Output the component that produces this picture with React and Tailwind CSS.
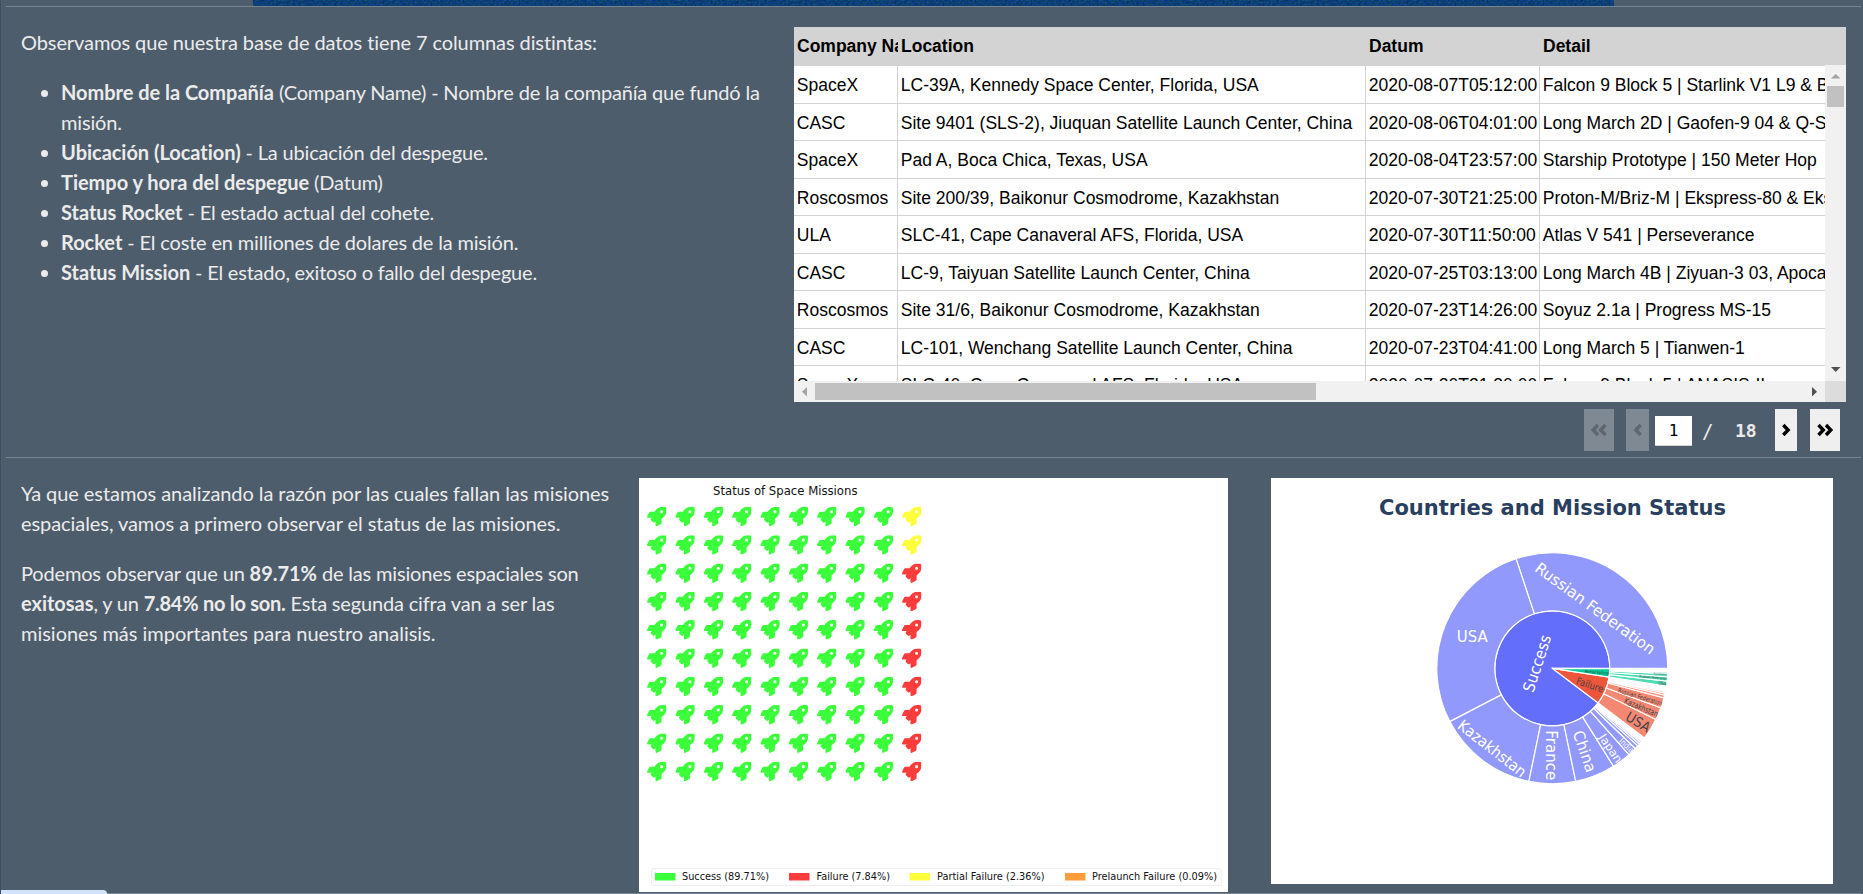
import React from "react";
import { FaRocket } from "react-icons/fa";

const rows = [
  ["SpaceX", "LC-39A, Kennedy Space Center, Florida, USA", "2020-08-07T05:12:00", "Falcon 9 Block 5 | Starlink V1 L9 & BlackSky"],
  ["CASC", "Site 9401 (SLS-2), Jiuquan Satellite Launch Center, China", "2020-08-06T04:01:00", "Long March 2D | Gaofen-9 04 & Q-SAT"],
  ["SpaceX", "Pad A, Boca Chica, Texas, USA", "2020-08-04T23:57:00", "Starship Prototype | 150 Meter Hop"],
  ["Roscosmos", "Site 200/39, Baikonur Cosmodrome, Kazakhstan", "2020-07-30T21:25:00", "Proton-M/Briz-M | Ekspress-80 & Ekspress-103"],
  ["ULA", "SLC-41, Cape Canaveral AFS, Florida, USA", "2020-07-30T11:50:00", "Atlas V 541 | Perseverance"],
  ["CASC", "LC-9, Taiyuan Satellite Launch Center, China", "2020-07-25T03:13:00", "Long March 4B | Ziyuan-3 03, Apocalypse-10"],
  ["Roscosmos", "Site 31/6, Baikonur Cosmodrome, Kazakhstan", "2020-07-23T14:26:00", "Soyuz 2.1a | Progress MS-15"],
  ["CASC", "LC-101, Wenchang Satellite Launch Center, China", "2020-07-23T04:41:00", "Long March 5 | Tianwen-1"],
  ["SpaceX", "SLC-40, Cape Canaveral AFS, Florida, USA", "2020-07-20T21:30:00", "Falcon 9 Block 5 | ANASIS-II"],
];
const COLS = "grid grid-cols-[104px_468px_174px_400px]";

function DataTable() {
  return (
    <div className="flex h-[375px] w-[1052px] flex-col overflow-hidden bg-white font-['Liberation_Sans',Arial,sans-serif] text-[17.5px] text-black">
      <div className={COLS + " h-[38px] shrink-0 bg-[#d3d3d3] font-bold leading-[38px]"}>
        {["Company Name", "Location", "Datum", "Detail"].map((h) => (
          <div key={h} className="overflow-hidden whitespace-nowrap pl-[3px]">{h}</div>
        ))}
      </div>
      <div className="flex h-[316px] shrink-0">
        <div className="h-[316px] w-[1031px] overflow-hidden">
          <div className="h-[1.25px] bg-[#d3d3d3]" />
          {rows.map((r, i) => (
            <div key={i} className={COLS + " h-[37.5px] leading-[38.4px]"}>
              {r.map((c, j) => (
                <div key={j} className="overflow-hidden whitespace-nowrap border-r border-b border-[#d3d3d3] pl-[2.8px]">{c}</div>
              ))}
            </div>
          ))}
        </div>
        <div className="flex w-[21px] flex-col items-center bg-[#f1f1f1]">
          <svg className="h-[21px] w-[21px] shrink-0" viewBox="0 0 21 21"><path d="M6 13.5h9.5L10.7 9z" fill="#a3a3a3" /></svg>
          <div className="h-[21px] w-[17px] shrink-0 bg-[#c1c1c1]" />
          <div className="grow" />
          <svg className="h-[21px] w-[21px] shrink-0" viewBox="0 0 21 21"><path d="M6 7h9.5l-4.8 5z" fill="#505050" /></svg>
        </div>
      </div>
      <div className="flex h-[21px] shrink-0 items-center bg-[#f1f1f1]">
        <svg className="h-[21px] w-[21px]" viewBox="0 0 21 21"><path d="M13 6v9.5L8 10.7z" fill="#a3a3a3" /></svg>
        <div className="h-[17px] w-[501px] bg-[#c1c1c1]" />
        <div className="grow" />
        <svg className="h-[21px] w-[21px]" viewBox="0 0 21 21"><path d="M8 6v9.5l5-4.8z" fill="#505050" /></svg>
        <div className="h-[21px] w-[21px] bg-[#dcdcdc]" />
      </div>
    </div>
  );
}

function Chevron({ double, right }) {
  return (
    <svg viewBox="0 0 20 16" className={"h-[16px] w-[20px] shrink-0 " + (right ? "" : "-scale-x-100")} fill="none" stroke="currentColor" strokeWidth="3.4">
      {double ? <path d="M3.5 3L8.3 8l-4.8 5M11 3L15.8 8L11 13" /> : <path d="M7.3 3L12.1 8L7.3 13" />}
    </svg>
  );
}

function Pager() {
  return (
    <div className="mt-[7px] flex h-[42px] items-center font-['DejaVu_Sans_Mono',monospace] text-black">
      <div className="ml-[790px] flex h-[42px] w-[30px] items-center justify-center bg-[#7f8993] text-[#5f666d]"><Chevron double /></div>
      <div className="ml-[12px] flex h-[42px] w-[23px] items-center justify-center bg-[#7f8993] text-[#5f666d]"><Chevron /></div>
      <div className="ml-[6px] mt-[2px] flex h-[30px] w-[37px] items-center justify-center border-b border-[#d3d3d3] bg-white text-[16px]">1</div>
      <div className="ml-[10px] mt-px w-[11px] text-[19px] text-[#ebebeb]">/</div>
      <div className="ml-[22px] mt-px w-[24px] text-[18px] font-bold text-[#ebebeb]">18</div>
      <div className="ml-[16px] flex h-[42px] w-[22px] items-center justify-center bg-[#efefef]"><Chevron right /></div>
      <div className="ml-[13px] flex h-[42px] w-[30px] items-center justify-center bg-[#efefef]"><Chevron double right /></div>
    </div>
  );
}

const legend = [
  [16, 43, "Success (89.71%)", 87, "#3cff3c"],
  [150, 177.5, "Failure (7.84%)", 73.5, "#ff3c3c"],
  [270.5, 298, "Partial Failure (2.36%)", 107.5, "#ffff3c"],
  [426, 453, "Prelaunch Failure (0.09%)", 125, "#ff9d3c"],
];

function Waffle() {
  const cells = [];
  for (let r = 0; r < 10; r++)
    for (let c = 0; c < 10; c++)
      cells.push(
        <FaRocket key={r * 10 + c} x={8 + c * 28.33} y={28.8 + r * 28.33} size={19.5} color={c < 9 ? "#3cff3c" : r < 2 ? "#ffff3c" : "#ff3c3c"} />
      );
  return (
    <svg viewBox="0 0 589 414" className="h-[414px] w-[589px] bg-white" fontFamily="DejaVu Sans, sans-serif">
      <text x="74" y="16.7" fontSize="12.2" textLength="144.5" lengthAdjust="spacingAndGlyphs" fill="#111">Status of Space Missions</text>
      {cells}
      <rect x="12.5" y="390.5" width="570" height="17" rx="2" fill="none" stroke="#eee" />
      {legend.map(([x, tx, label, w, color]) => (
        <g key={label}>
          <rect x={x} y="395" width="20.5" height="7.5" fill={color} />
          <text x={tx} y="402.3" fontSize="9.7" textLength={w} lengthAdjust="spacingAndGlyphs" fill="#111">{label}</text>
        </g>
      ))}
    </svg>
  );
}

function arc(r0, r1, a, b) {
  const p = (r, t) => `${(r * Math.cos((t * Math.PI) / 180)).toFixed(2)} ${(-r * Math.sin((t * Math.PI) / 180)).toFixed(2)}`;
  const big = b - a > 180 ? 1 : 0;
  return `M${p(r0, a)}L${p(r1, a)}A${r1} ${r1} 0 ${big} 0 ${p(r1, b)}L${p(r0, b)}A${r0} ${r0} 0 ${big} 1 ${p(r0, a)}Z`;
}
const inner = [[0, 322.96, "#636efa"], [322.96, 351.2, "#ef553b"], [351.2, 359.68, "#00cc96"]];
const outer = [
  ["#9299fc", [0, 108.3, 207.5, 258.3, 281.7, 302, 311.6, 316, 317.8, 319, 320, 320.8, 321.4, 321.9, 322.3, 322.6, 322.96]],
  ["#f48872", [322.96, 333.7, 340, 345.2, 346.6, 347.6, 348.4, 349, 349.5, 350, 350.4, 350.8, 351.2]],
  ["#4ddbb5", [351.2, 353.6, 355.8, 357.4, 358.2, 358.7, 359.1, 359.4, 359.68]],
];
const labels = [
  ["Success", -15.5, -5, -72, 16, 59, "#fff"],
  ["Russian Federation", 43, -60, 36, 15.5, 144, "#fff"],
  ["USA", -80, -31.5, 0, 15.5, 31, "#fff"],
  ["Kazakhstan", -60, 80, 38, 15.5, 82, "#fff"],
  ["France", -1, 87, 90, 15.5, 50, "#fff"],
  ["China", 32.5, 83, 71, 15.5, 43, "#fff"],
  ["Japan", 58.5, 80, 56, 11.5, 32, "#fff"],
  ["India", 74.5, 77, 45, 8.5, 17, "#fff"],
  ["Failure", 37.5, 16.5, 19, 10, 28, "#444"],
  ["USA", 86, 53.5, 31, 14, 26, "#444"],
  ["Kazakhstan", 89, 39, 23, 8.5, 36, "#444"],
  ["Russian Federation", 88, 28.5, 17, 6.5, 46, "#444"],
  ["Partial Failure", 44.5, 4, 4, 4, 24, "#444"],
  ["USA", 110, 15, 7, 4.5, 8, "#444"],
  ["Russian Federation", 101, 9, 5, 3.5, 28, "#444"],
  ["Kazakhstan", 108, 5.5, 3, 2.5, 13, "#444"],
];

function Sunburst() {
  return (
    <svg viewBox="0 0 562 406" className="h-[406px] w-[562px] bg-white" fontFamily="DejaVu Sans, Verdana, sans-serif">
      <text x="108" y="37" fontSize="21.2" fontWeight="bold" textLength="347" lengthAdjust="spacingAndGlyphs" fill="#2a3f5f">Countries and Mission Status</text>
      <g transform="translate(281.3 190.3)">
        <g stroke="#fff" strokeWidth="1.2">
          {inner.map(([a, b, c]) => <path key={a} d={arc(0, 57.5, a, b)} fill={c} />)}
          {outer.map(([c, s]) => s.slice(1).map((b, i) => <path key={b} d={arc(57.5, 115.5, s[i], b)} fill={c} />))}
        </g>
        {labels.map(([t, x, y, rot, size, w, c], i) => (
          <text key={i} transform={`translate(${x} ${y}) rotate(${rot})`} fontSize={size} x={-w / 2} y={size * 0.36} textLength={w} lengthAdjust="spacingAndGlyphs" fill={c}>{t}</text>
        ))}
      </g>
    </svg>
  );
}

const B = ({ children }) => <b className="tracking-[-0.03px]">{children}</b>;

export default function App() {
  return (
    <div className="relative flex h-[894px] w-[1863px] flex-col overflow-hidden border-l border-[#3f4f5f] bg-[#4e5d6c] font-['Lato',sans-serif] text-[20px] leading-[30px] tracking-[-0.17px] text-[#ebebeb] [font-variant-ligatures:none]">
      <div className="ml-[252px] h-[6px] w-[1361px] shrink-0 bg-[#0f3f78]">
        <svg className="block h-full w-full">
          <filter id="grain" colorInterpolationFilters="sRGB" x="0" y="0" width="100%" height="100%"><feTurbulence type="fractalNoise" baseFrequency="0.5" numOctaves="2" /><feColorMatrix values="0.1 0 0 0 0  0 0.3 0 0 0.1  0 0 0.45 0 0.24  0 0 0 0 1" /></filter>
          <rect width="100%" height="100%" filter="url(#grain)" />
        </svg>
      </div>
      <div className="ml-[5px] mr-[2px] h-px shrink-0 bg-[#768492]" />
      <section className="flex h-[450px] shrink-0 pt-[20px]">
        <div className="w-[793px] pl-5 pr-[24px]">
          <p className="mb-5 tracking-[-0.095px]">Observamos que nuestra base de datos tiene 7 columnas distintas:</p>
          <ul className="list-disc pl-10">
            <li><B>Nombre de la Compañía</B> (Company Name) - Nombre de la compañía que fundó la misión.</li>
            <li><B>Ubicación (Location)</B> - La ubicación del despegue.</li>
            <li><B>Tiempo y hora del despegue</B> (Datum)</li>
            <li><B>Status Rocket</B> - El estado actual del cohete.</li>
            <li><B>Rocket</B> - El coste en milliones de dolares de la misión.</li>
            <li className="tracking-[-0.22px]"><B>Status Mission</B> - El estado, exitoso o fallo del despegue.</li>
          </ul>
        </div>
        <div className="w-[1052px] tracking-normal">
          <DataTable />
          <Pager />
        </div>
      </section>
      <div className="ml-[5px] mr-[2px] h-px shrink-0 bg-[#768492]" />
      <section className="flex h-[435px] shrink-0 pt-[20px]">
        <div className="w-[638px] pl-5 pr-[24px]">
          <p className="mb-5 tracking-[-0.07px]">Ya que estamos analizando la razón por las cuales fallan las misiones espaciales, vamos a primero observar el status de las misiones.</p>
          <p>Podemos observar que un <B>89.71%</B> de las misiones espaciales son <B>exitosas</B>, y un <b className="tracking-[-0.27px]">7.84% no lo son.</b> Esta segunda cifra van a ser las <span className="tracking-[-0.015px]">misiones más importantes para nuestro analisis.</span></p>
        </div>
        <div className="tracking-normal"><Waffle /></div>
        <div className="ml-[43px] tracking-normal"><Sunburst /></div>
      </section>
      <div className="ml-[5px] mr-[2px] h-px shrink-0 bg-[#768492]" />
      <div className="absolute -left-px bottom-0 h-[4px] w-[107px] rounded-tr-[4px] bg-[#d3e3fd]" />
    </div>
  );
}
